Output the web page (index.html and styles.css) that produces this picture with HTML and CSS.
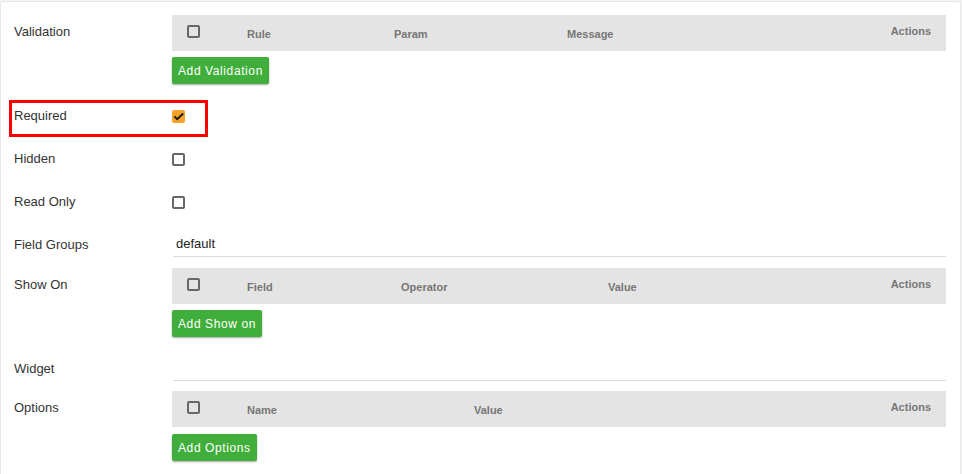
FILE: index.html
```html
<!DOCTYPE html>
<html>
<head>
<meta charset="utf-8">
<link rel="stylesheet" href="styles.css">
</head>
<body>
<div class="card">
  <div class="row row-table">
    <div class="label">Validation</div>
    <div class="control">
      <div class="thead">
        <div class="th th-check"><span class="cb"></span></div>
        <div class="th w147">Rule</div>
        <div class="th w173">Param</div>
        <div class="th grow">Message</div>
        <div class="th th-actions">Actions</div>
      </div>
      <button class="btn">Add Validation</button>
    </div>
  </div>

  <div class="row row-check">
    <span class="highlight"></span>
    <div class="label">Required</div>
    <div class="control"><span class="cb cb-checked"><svg viewBox="0 0 13 13" width="13" height="13"><path d="M2.4 6.4 L5.2 9.2 L11.2 3.6" fill="none" stroke="#1a1a1a" stroke-width="2"/></svg></span></div>
  </div>

  <div class="row row-check">
    <div class="label">Hidden</div>
    <div class="control"><span class="cb"></span></div>
  </div>

  <div class="row row-check">
    <div class="label">Read Only</div>
    <div class="control"><span class="cb"></span></div>
  </div>

  <div class="row row-input">
    <div class="label">Field Groups</div>
    <div class="control"><div class="input">default</div></div>
  </div>

  <div class="row row-table">
    <div class="label">Show On</div>
    <div class="control">
      <div class="thead">
        <div class="th th-check"><span class="cb"></span></div>
        <div class="th w154">Field</div>
        <div class="th w207">Operator</div>
        <div class="th grow">Value</div>
        <div class="th th-actions">Actions</div>
      </div>
      <button class="btn">Add Show on</button>
    </div>
  </div>

  <div class="row row-input row-widget">
    <div class="label">Widget</div>
    <div class="control"><div class="input"></div></div>
  </div>

  <div class="row row-table row-options">
    <div class="label">Options</div>
    <div class="control">
      <div class="thead">
        <div class="th th-check"><span class="cb"></span></div>
        <div class="th w227">Name</div>
        <div class="th grow">Value</div>
        <div class="th th-actions">Actions</div>
      </div>
      <button class="btn">Add Options</button>
    </div>
  </div>
</div>
</body>
</html>
```
FILE: styles.css
```css
html, body {
  margin: 0;
  padding: 0;
  background: #f4f4f4;
  font-family: "Liberation Sans", Arial, sans-serif;
  color: #333;
}

.card {
  background: #fff;
  margin: 2px 2px 0 1px;
  padding: 13px 14px 20px 13px;
  box-shadow: 0 0 2px rgba(0, 0, 0, 0.18);
  border-radius: 2px;
  min-height: 470px;
  box-sizing: border-box;
}

.row {
  display: flex;
  position: relative;
}

.label {
  width: 158px;
  flex: none;
  font-size: 13px;
  line-height: 16px;
  color: #333;
}

.control {
  flex: 1;
  min-width: 0;
}

/* table rows */
.row-table .label {
  padding-top: 9px;
}

.row-table {
  margin-bottom: 11px;
}

.thead {
  display: flex;
  height: 36px;
  background: #e4e4e4;
}

.th {
  font-size: 11px;
  font-weight: bold;
  color: #767676;
  padding-top: 13px;
  line-height: 13px;
  box-sizing: border-box;
  white-space: nowrap;
}

.th-check {
  width: 75px;
  padding-left: 15px;
  padding-top: 10px;
}

.w147 { width: 147px; }
.w173 { width: 173px; }
.w154 { width: 154px; }
.w207 { width: 207px; }
.w227 { width: 227px; }

.grow { flex: 1; }

.th-actions {
  padding-top: 10px;
  padding-right: 15px;
}

.btn {
  display: block;
  margin-top: 6px;
  height: 27px;
  padding: 0 6px;
  border: none;
  border-radius: 2px;
  background: #3fae3a;
  color: #fff;
  font-family: "Liberation Sans", Arial, sans-serif;
  font-size: 12px;
  letter-spacing: 0.6px;
  box-shadow: 0 1px 2px rgba(0, 0, 0, 0.35);
}

.row-options .btn {
  margin-top: 7px;
}

/* checkbox */
.cb {
  display: block;
  width: 13px;
  height: 13px;
  box-sizing: border-box;
  border: 2px solid #676767;
  border-radius: 2px;
}

.cb-checked {
  border: none;
  background: #f7a229;
}

.cb-checked svg {
  display: block;
  overflow: visible;
}

.row-check {
  height: 43px;
  align-items: center;
}

.row-check .label {
  margin-top: -1px;
}

.highlight {
  position: absolute;
  left: -5px;
  top: 5px;
  width: 199px;
  height: 37px;
  border: 3px solid #f00;
  box-sizing: border-box;
}

/* inputs */
.row-input {
  height: 28px;
  align-items: center;
  margin-top: 5px;
  margin-bottom: 11px;
}

.row-input .label {
  padding-top: 4px;
}

.input {
  height: 28px;
  box-sizing: border-box;
  border-bottom: 1px solid #dcdcdc;
  margin-left: 1px;
  padding: 7px 0 0 3px;
  font-size: 13px;
  line-height: 16px;
  color: #222;
}

.row-widget {
  margin-top: 16px;
  margin-bottom: 10px;
}
```
